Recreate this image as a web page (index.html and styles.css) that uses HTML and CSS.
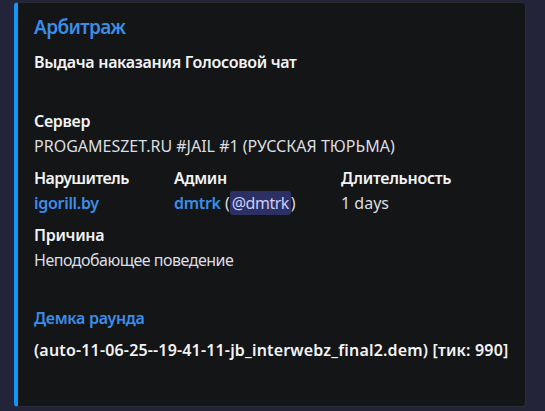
FILE: index.html
```html
<!DOCTYPE html>
<html lang="ru">
<head>
<meta charset="utf-8">
<link rel="stylesheet" href="styles.css">
</head>
<body>
<div class="embed">
  <div class="title">Арбитраж</div>
  <div class="desc">Выдача наказания Голосовой чат</div>
  <div class="field first">
    <div class="name">Сервер</div>
    <div class="value">PROGAMESZET.RU #JAIL #1 (РУССКАЯ ТЮРЬМА)</div>
  </div>
  <div class="row">
    <div class="field">
      <div class="name narrow">Нарушитель</div>
      <div class="value"><span class="link">igorill.by</span></div>
    </div>
    <div class="field">
      <div class="name">Админ</div>
      <div class="value"><span class="link">dmtrk</span> (<span class="mention">@dmtrk</span>)</div>
    </div>
    <div class="field">
      <div class="name">Длительность</div>
      <div class="value">1 days</div>
    </div>
  </div>
  <div class="field">
    <div class="name">Причина</div>
    <div class="value tight">Неподобающее поведение</div>
  </div>
  <div class="field demo">
    <div class="name link">Демка раунда</div>
    <div class="value strong">(auto-11-06-25--19-41-11-jb_interwebz_final2.dem) [тик: 990]</div>
  </div>
</div>
</body>
</html>
```
FILE: styles.css
```css
html, body {
  margin: 0;
  padding: 0;
  background: #23243a;
}
body {
  padding: 2px 19px 4px 14px;
  font-family: "Noto Sans", "DejaVu Sans", sans-serif;
}
.embed {
  box-sizing: border-box;
  height: 405px;
  background: #141517;
  border: 1px solid #2a2c36;
  border-left: 4px solid #0e96f8;
  border-radius: 4px;
  padding: 12px 16px 0 16px;
  display: flex;
  flex-direction: column;
}
.title {
  font-size: 19px;
  font-weight: 600;
  line-height: 24px;
  letter-spacing: -0.6px;
  color: #3a8ee8;
}
.desc {
  margin-top: 12px;
  font-size: 16px;
  font-weight: 600;
  line-height: 23px;
  letter-spacing: -0.3px;
  color: #f2f3f5;
}
.field {
  display: flex;
  flex-direction: column;
  gap: 2px;
  margin-top: 9px;
}
.field.first {
  margin-top: 36px;
}
.field.demo {
  margin-top: 35px;
  gap: 9px;
}
.row {
  display: grid;
  grid-template-columns: 140px 167px 1fr;
}
.name {
  font-size: 16px;
  font-weight: 600;
  line-height: 23px;
  letter-spacing: -0.3px;
  color: #f2f3f5;
}
.name.narrow {
  letter-spacing: -0.6px;
}
.value {
  font-size: 16px;
  font-weight: 400;
  line-height: 23px;
  color: #dbdee1;
  white-space: nowrap;
}
.value.tight {
  letter-spacing: -0.5px;
}
.value.strong {
  font-weight: 600;
  color: #f2f3f5;
  letter-spacing: 0.17px;
}
.link {
  color: #3a8ee8;
  font-weight: 600;
  letter-spacing: -0.3px;
}
.name.link {
  color: #3a8ee8;
}
.mention {
  background: #2c3063;
  color: #c9cdfb;
  border-radius: 3px;
  padding: 1px 2px;
  letter-spacing: -0.5px;
}
```
